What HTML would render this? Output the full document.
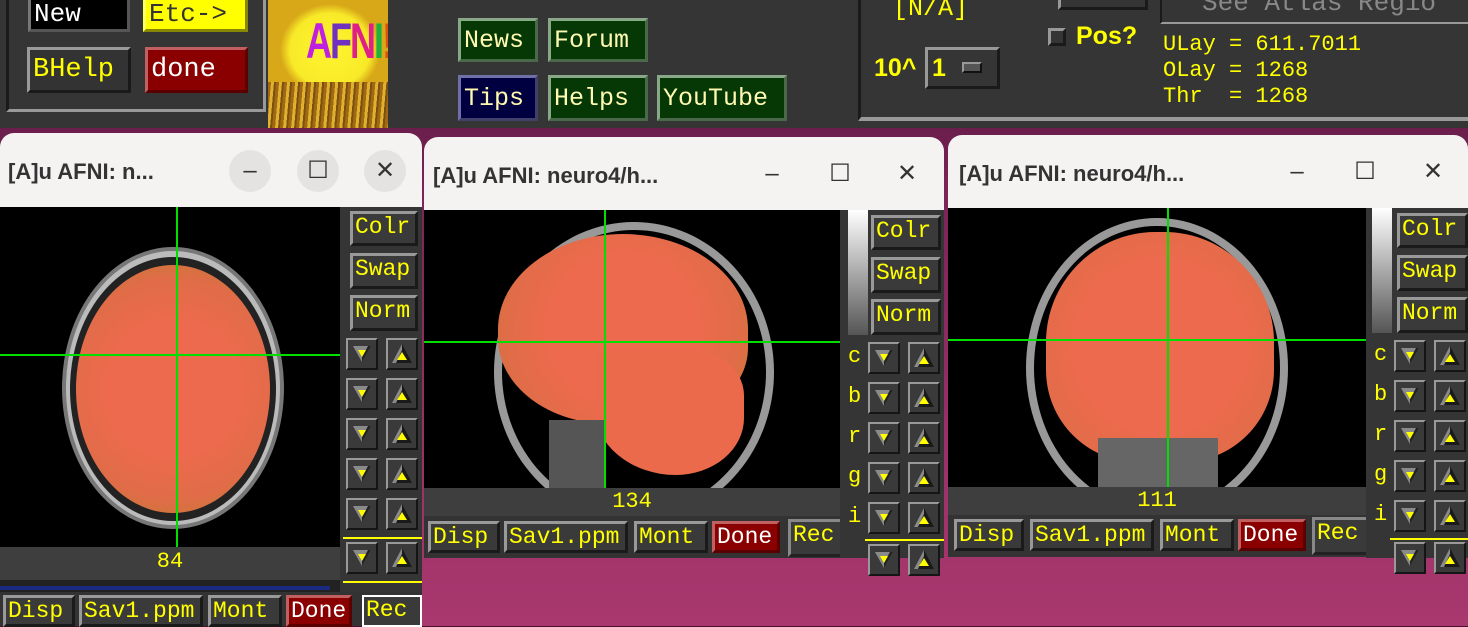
<!DOCTYPE html>
<html><head><meta charset="utf-8"><style>
*{box-sizing:border-box;margin:0;padding:0}
body{width:1468px;height:626px;overflow:hidden;position:relative;background:linear-gradient(180deg,#4a1034 0%,#7a2456 30%,#9a3068 70%,#a8386e 100%);font-family:"Liberation Mono",monospace}
.a{position:absolute}
.btn{position:absolute;border:3px solid;border-color:#9a9a9a #1a1a1a #1a1a1a #9a9a9a;color:#ffff00;font-size:24px;line-height:1;padding-left:3px;display:flex;align-items:center;background:#3a3a3a;white-space:nowrap}
.g{background:#063806;border-color:#88a888 #4a684a #4a684a #88a888;color:#fff8b0;font-size:25px}
.tb{position:absolute;background:#f4f3f2;border-radius:14px 14px 0 0;font-family:"Liberation Sans",sans-serif;font-weight:bold;color:#333;font-size:22px}
.circ{position:absolute;width:42px;height:42px;border-radius:50%;background:#e4e3e2;color:#333;font-size:24px;text-align:center;line-height:42px;font-weight:normal}
.nc{background:transparent}
.img{position:absolute;background:#000;overflow:hidden}
.ctl{position:absolute;background:#353535}
.ar{position:absolute;width:32px;height:32px}
.strip{position:absolute;background:#3e3e3e;color:#ffff00;font-size:22px;text-align:center}
.bar{position:absolute;background:#333}
.bb{position:absolute;top:3px;height:32px;border:3px solid;border-color:#999 #1a1a1a #1a1a1a #999;background:#3a3a3a;color:#ffff00;font-size:23px;line-height:26px;padding-left:2px;white-space:nowrap}
.red{background:#8a0000;border-color:#c06060 #5a0000 #5a0000 #c06060;color:#fff}
.hl{position:absolute;height:2px;background:#00e000}
.vl{position:absolute;width:2px;background:#00e000}
.lt{position:absolute;color:#ffff00;font-size:22px}
</style></head><body>

<div class="a" style="left:0;top:0;width:1468px;height:128px;background:#353535"></div>
<div class="a" style="left:6px;top:-4px;width:260px;height:116px;border:3px solid;border-color:#1a1a1a #999 #999 #1a1a1a"></div>
<div class="btn" style="left:28px;top:-4px;width:102px;height:36px;background:#000;color:#fff;border-color:#777 #555 #555 #777;font-size:26px">New</div>
<div class="btn" style="left:143px;top:-4px;width:105px;height:36px;background:#ffff00;color:#333;border-color:#ffff60 #888800 #888800 #ffff60;font-size:26px">Etc-&gt;</div>
<div class="btn" style="left:27px;top:47px;width:104px;height:46px;font-size:27px;background:#333">BHelp</div>
<div class="btn red" style="left:145px;top:47px;width:103px;height:46px;font-size:27px">done</div>
<div class="a" style="left:268px;top:0;width:120px;height:128px;background:radial-gradient(ellipse 50px 46px at 62px 50px,#fff430 0%,#f8ea28 80%,#d8a818 100%),#b88a18;overflow:hidden">
 <div class="a" style="left:0;top:82px;width:120px;height:46px;background:repeating-linear-gradient(95deg,#a06810 0 3px,#e0b030 3px 6px,#7a5010 6px 8px)"></div>
 <div class="a" style="left:38px;top:12px;width:80px;font:bold 36px 'Liberation Sans',sans-serif;letter-spacing:-2px;transform:scaleY(1.4);transform-origin:top"><span style="color:#c020e0">A</span><span style="color:#7030c0">F</span><span style="color:#e0208a">N</span><span style="color:#20b040">I</span><span style="color:#e05010">!</span></div>
</div>
<div class="btn g" style="left:458px;top:18px;width:80px;height:44px">News</div>
<div class="btn g" style="left:548px;top:18px;width:100px;height:44px">Forum</div>
<div class="btn g" style="left:458px;top:75px;width:80px;height:46px;background:#000040;border-color:#7070a8 #404068 #404068 #7070a8">Tips</div>
<div class="btn g" style="left:548px;top:75px;width:100px;height:46px">Helps</div>
<div class="btn g" style="left:657px;top:75px;width:130px;height:46px">YouTube</div>
<div class="a" style="left:858px;top:-4px;width:620px;height:125px;border-left:3px solid #1a1a1a;border-bottom:4px solid #999"></div>
<div class="lt" style="left:893px;top:-6px;font-size:25px">[N/A]</div>
<div class="a" style="left:1058px;top:-6px;width:90px;height:16px;border:3px solid;border-color:#999 #1a1a1a #1a1a1a #999"></div>
<div class="a" style="left:1160px;top:-6px;width:310px;height:30px;border:2px solid;border-color:#1a1a1a #999 #999 #1a1a1a;color:#888;font-size:26px;line-height:14px;padding-left:40px">See Atlas Regio</div>
<div class="a" style="left:1048px;top:28px;width:18px;height:18px;border:3px solid;border-color:#999 #1a1a1a #1a1a1a #999"></div>
<div class="lt" style="left:1076px;top:22px;font-size:25px;font-weight:bold;font-family:'Liberation Sans',sans-serif">Pos?</div>
<div class="lt" style="left:874px;top:54px;font-size:25px;font-weight:bold;font-family:'Liberation Sans',sans-serif">10^</div>
<div class="a" style="left:925px;top:47px;width:75px;height:42px;border:3px solid;border-color:#999 #1a1a1a #1a1a1a #999;color:#ff0;font:bold 25px 'Liberation Sans',sans-serif;padding:4px 0 0 4px">1<span style="position:absolute;left:34px;top:12px;width:20px;height:11px;background:#555;border:2px solid;border-color:#999 #111 #111 #999"></span></div>
<div class="lt" style="left:1163px;top:32px;line-height:26px;white-space:pre">ULay = 611.7011
OLay = 1268
Thr  = 1268</div>

<!-- window 1 -->
<div class="tb" style="left:0;top:133px;width:422px;height:75px"><div class="a" style="left:8px;top:26px">[A]u AFNI: n...</div>
<div class="circ" style="left:229px;top:17px">–</div><div class="circ" style="left:297px;top:17px">☐</div><div class="circ" style="left:364px;top:17px">✕</div></div>
<div class="img" style="left:0;top:207px;width:340px;height:340px">
 <div class="a" style="left:62px;top:40px;width:222px;height:282px;border-radius:50%;background:#bbb;border:4px solid #777"></div>
 <div class="a" style="left:70px;top:50px;width:206px;height:264px;border-radius:50%;background:#222"></div>
 <div class="a" style="left:76px;top:58px;width:194px;height:248px;border-radius:50%;background:radial-gradient(circle,#ee6a4e 40%,#e06c48 70%,#b8802a 100%)"></div>
</div>
<div class="hl" style="left:0;top:354px;width:340px"></div><div class="vl" style="left:176px;top:207px;height:340px"></div>
<div class="strip" style="left:0;top:547px;width:340px;height:33px;line-height:26px;padding-top:2px">84</div>
<div class="a" style="left:0;top:580px;width:340px;height:14px;background:#222"></div>
<div class="a" style="left:0;top:586px;width:330px;height:4px;background:#1a2a80"></div>
<div class="bar" style="left:0;top:592px;width:422px;height:34px"></div>
<div class="bb" style="left:3px;top:595px;width:72px">Disp</div>
<div class="bb" style="left:79px;top:595px;width:124px">Sav1.ppm</div>
<div class="bb" style="left:208px;top:595px;width:74px">Mont</div>
<div class="bb red" style="left:286px;top:595px;width:66px">Done</div>
<div class="bb" style="left:362px;top:595px;width:60px;border-color:#fff #fff #fff #fff;border-width:2px">Rec</div>
<div class="ctl" style="left:340px;top:207px;width:82px;height:385px"></div>
<div class="bb" style="left:350px;top:211px;width:68px;height:35px">Colr</div>
<div class="bb" style="left:350px;top:253px;width:68px;height:36px">Swap</div>
<div class="bb" style="left:350px;top:295px;width:68px;height:36px">Norm</div>

<!-- window 2 -->
<div class="tb" style="left:424px;top:137px;width:520px;height:74px"><div class="a" style="left:9px;top:26px">[A]u AFNI: neuro4/h...</div>
<div class="circ nc" style="left:327px;top:16px">–</div><div class="circ nc" style="left:395px;top:16px">☐</div><div class="circ nc" style="left:462px;top:16px">✕</div></div>
<div class="img" style="left:424px;top:210px;width:416px;height:278px">
 <div class="a" style="left:70px;top:12px;width:280px;height:300px;border-radius:50%;border:8px solid #999"></div>
 <div class="a" style="left:74px;top:24px;width:250px;height:190px;border-radius:50% 50% 40% 45%;background:radial-gradient(circle,#ee6a4e 45%,#e06c48 75%,#b8802a 100%)"></div>
 <div class="a" style="left:170px;top:140px;width:150px;height:125px;border-radius:10% 40% 50% 60%;background:#ec6a4c"></div>
 <div class="a" style="left:125px;top:210px;width:55px;height:68px;background:#555"></div>
</div>
<div class="hl" style="left:424px;top:341px;width:416px"></div><div class="vl" style="left:604px;top:210px;height:278px"></div>
<div class="strip" style="left:424px;top:488px;width:416px;height:30px;line-height:28px">134</div>
<div class="bar" style="left:424px;top:516px;width:428px;height:42px"></div>
<div class="bb" style="left:428px;top:521px;width:72px">Disp</div>
<div class="bb" style="left:504px;top:521px;width:124px">Sav1.ppm</div>
<div class="bb" style="left:634px;top:521px;width:74px">Mont</div>
<div class="bb red" style="left:712px;top:521px;width:68px">Done</div>
<div class="bb" style="left:788px;top:519px;width:60px;height:38px;border-color:#888 #fff #222 #888">Rec</div>
<div class="ctl" style="left:840px;top:210px;width:104px;height:348px"></div>
<div class="a" style="left:848px;top:210px;width:20px;height:125px;background:linear-gradient(180deg,#fff,#555)"></div>
<div class="bb" style="left:871px;top:215px;width:70px;height:35px">Colr</div>
<div class="bb" style="left:871px;top:257px;width:70px;height:36px">Swap</div>
<div class="bb" style="left:871px;top:299px;width:70px;height:36px">Norm</div>

<!-- window 3 -->
<div class="tb" style="left:948px;top:135px;width:520px;height:74px"><div class="a" style="left:11px;top:26px">[A]u AFNI: neuro4/h...</div>
<div class="circ nc" style="left:328px;top:16px">–</div><div class="circ nc" style="left:396px;top:16px">☐</div><div class="circ nc" style="left:464px;top:16px">✕</div></div>
<div class="img" style="left:948px;top:208px;width:418px;height:279px">
 <div class="a" style="left:78px;top:10px;width:262px;height:300px;border-radius:50%;border:8px solid #999"></div>
 <div class="a" style="left:98px;top:24px;width:228px;height:230px;border-radius:48% 48% 40% 40%;background:radial-gradient(circle,#ee6a4e 50%,#e06c48 80%,#b8802a 100%)"></div>
 <div class="a" style="left:150px;top:230px;width:120px;height:50px;background:#666"></div>
</div>
<div class="hl" style="left:948px;top:339px;width:418px"></div><div class="vl" style="left:1167px;top:208px;height:279px"></div>
<div class="strip" style="left:948px;top:487px;width:418px;height:30px;line-height:28px">111</div>
<div class="bar" style="left:948px;top:515px;width:430px;height:42px"></div>
<div class="bb" style="left:954px;top:519px;width:70px">Disp</div>
<div class="bb" style="left:1030px;top:519px;width:124px">Sav1.ppm</div>
<div class="bb" style="left:1160px;top:519px;width:74px">Mont</div>
<div class="bb red" style="left:1238px;top:519px;width:68px">Done</div>
<div class="bb" style="left:1312px;top:517px;width:60px;height:38px;border-color:#888 #fff #222 #888">Rec</div>
<div class="ctl" style="left:1366px;top:208px;width:102px;height:350px"></div>
<div class="a" style="left:1372px;top:208px;width:20px;height:125px;background:linear-gradient(180deg,#fff,#555)"></div>
<div class="bb" style="left:1397px;top:213px;width:71px;height:35px">Colr</div>
<div class="bb" style="left:1397px;top:255px;width:71px;height:36px">Swap</div>
<div class="bb" style="left:1397px;top:297px;width:71px;height:36px">Norm</div>

<script>
var DN='<svg width="32" height="32"><rect width="32" height="32" fill="#3a3a3a"/><path d="M0 0H32L30 2H2V30L0 32Z" fill="#999"/><path d="M32 0V32H0L2 30H30V2Z" fill="#151515"/><path d="M7 8H25L16 24Z" fill="#8a8a8a"/><path d="M16 24L25 8H22L16 19Z" fill="#222"/><path d="M12 12H20L16 19Z" fill="#ff0"/></svg>';
var UP='<svg width="32" height="32"><rect width="32" height="32" fill="#3a3a3a"/><path d="M0 0H32L30 2H2V30L0 32Z" fill="#999"/><path d="M32 0V32H0L2 30H30V2Z" fill="#151515"/><path d="M16 6L26 25H6Z" fill="#1a1a1a"/><path d="M16 6L6 25H10L16 12Z" fill="#8a8a8a"/><path d="M16 14L21 22H11Z" fill="#ff0"/></svg>';
function arrows(x1,x2,ys,lx,letters){ys.forEach(function(y,i){
 var d=document.createElement('div');d.className='ar';d.style.left=x1+'px';d.style.top=y+'px';d.innerHTML=DN;document.body.appendChild(d);
 var u=document.createElement('div');u.className='ar';u.style.left=x2+'px';u.style.top=y+'px';u.innerHTML=UP;document.body.appendChild(u);
 if(letters){var l=document.createElement('div');l.className='lt';l.style.left=lx+'px';l.style.top=(y+2)+'px';l.textContent=letters[i];document.body.appendChild(l);}
});}
arrows(346,386,[338,378,418,458,498,542],0,null);
arrows(868,908,[342,382,422,462,502,544],848,['c','b','r','g','i','']);
arrows(1394,1434,[340,380,420,460,500,542],1374,['c','b','r','g','i','']);
</script>
<div class="a" style="left:343px;top:537px;width:79px;height:2px;background:#ff0"></div>
<div class="a" style="left:343px;top:581px;width:79px;height:2px;background:#ff0"></div>
<div class="a" style="left:865px;top:539px;width:79px;height:2px;background:#ff0"></div>
<div class="a" style="left:1390px;top:538px;width:78px;height:2px;background:#ff0"></div>
</body></html>
